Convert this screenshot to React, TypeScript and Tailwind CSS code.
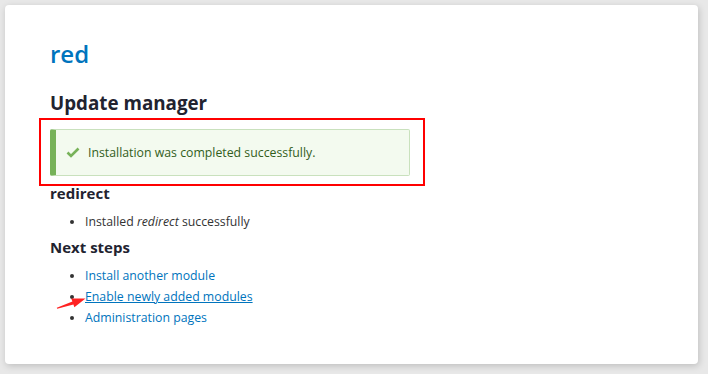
const FONT = { fontFamily: '"Open Sans", "DejaVu Sans", sans-serif' };

function Check() {
  return (
    <svg width="14" height="11" viewBox="0 0 14 11" className="shrink-0">
      <path d="M1.5 5.5 L5 9 L12.5 1.5" fill="none" stroke="#77b259" strokeWidth="2.6" />
    </svg>
  );
}

function Bullet({ children }: { children: React.ReactNode }) {
  return (
    <li className="flex items-center">
      <span className="ml-[20px] mr-[11px] h-[4px] w-[4px] shrink-0 rounded-full bg-[#333]" />
      {children}
    </li>
  );
}

const LINKS = ["Install another module", "Enable newly added modules", "Administration pages"];

export default function App() {
  return (
    <div className="relative h-[374px] w-[708px] bg-[#e8e8e8] p-[5px] pr-[10px]" style={FONT}>
      <div className="h-[359px] rounded-[4px] bg-white pl-[45px] pt-[34px] shadow-[1px_2px_7px_rgba(0,0,0,0.18)]">
        <h1 className="text-[24px] font-semibold leading-[30px] text-[#0074bd]">red</h1>
        <h2 className="mt-[22px] text-[18.8px] font-bold leading-[24px] text-[#222330]">Update manager</h2>

        <div className="-ml-[11px] mt-[3px] w-[386px] border-2 border-[#f00] pb-[8px] pl-[9px] pr-[13px] pt-[9px]">
          <div className="flex h-[47px] items-center rounded-[2px] border border-l-[6px] border-[#c9e1bd] border-l-[#77b259] bg-[#f3faef] pl-[10px]">
            <Check />
            <span className="ml-[8px] text-[12.3px] leading-[18px] text-[#325e1c]">
              Installation was completed successfully.
            </span>
          </div>
        </div>

        <h3 className="mt-[1px] text-[15px] font-bold leading-[12px] text-[#222330]">redirect</h3>
        <ul className="mt-[14px] text-[12.3px] leading-[18px] text-[#333]">
          <Bullet>
            <span>
              Installed <em>redirect</em> successfully
            </span>
          </Bullet>
        </ul>

        <h3 className="mt-[10px] text-[15px] font-bold leading-[12px] text-[#222330]">Next steps</h3>
        <ul className="mt-[12px] text-[12.3px] leading-[21px]">
          {LINKS.map((l, i) => (
            <Bullet key={l}>
              <a href="#" className={i === 1 ? "text-[#0074bd] underline" : "text-[#0074bd]"}>
                {l}
              </a>
            </Bullet>
          ))}
        </ul>
      </div>

      <svg className="absolute left-0 top-0" width="708" height="374" viewBox="0 0 708 374" pointerEvents="none">
        <polygon
          points="57.2,308.8 73.4,304.4 74.4,307.2 85.5,298.4 71.2,298.6 72.4,301.6 56.8,307.8"
          fill="#f22"
        />
      </svg>
    </div>
  );
}
